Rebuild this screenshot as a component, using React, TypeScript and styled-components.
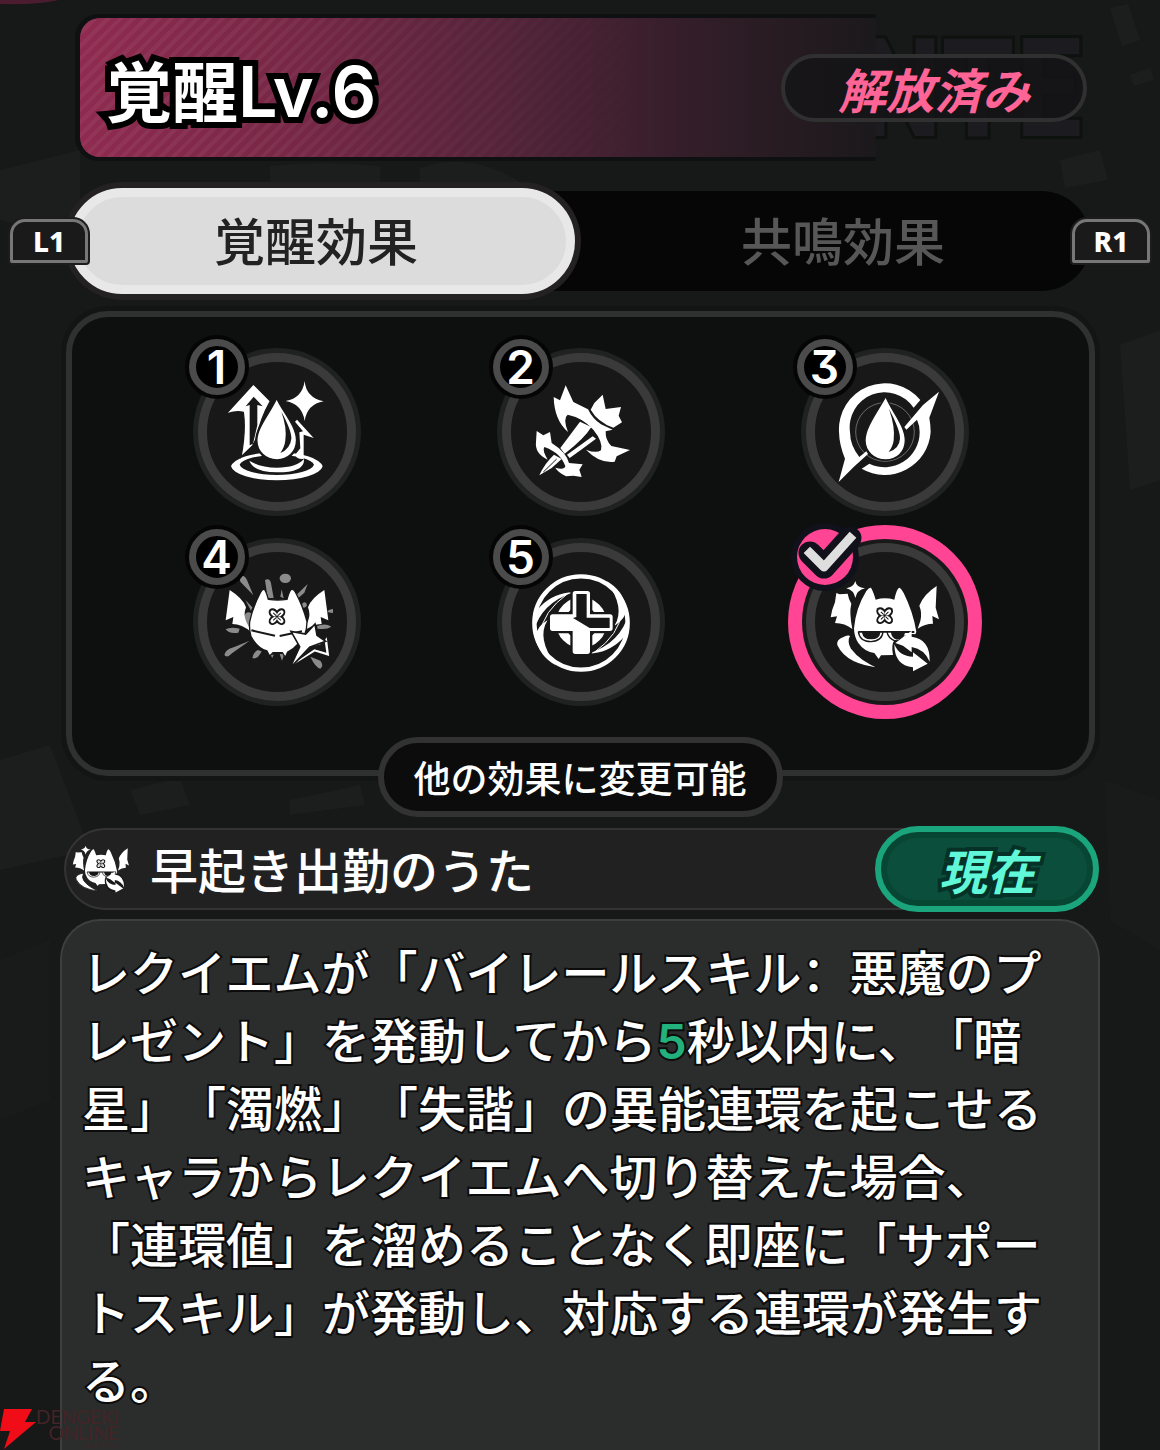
import React, { useState } from "react";
import styled, { createGlobalStyle, css } from "styled-components";

const ink = "#181818";

const GlobalStyle = createGlobalStyle`
  *, *::before, *::after { box-sizing: border-box; }
  body {
    margin: 0;
    background: #171818;
    color: #fff;
    font-family: "Noto Sans CJK JP", sans-serif;
    text-spacing-trim: space-all;
  }
  button { font: inherit; color: inherit; padding: 0; border: 0; background: none; cursor: pointer; }
  h1, h2, p { margin: 0; }
`;

const Page = styled.main`
  position: relative;
  display: flex;
  flex-direction: column;
  min-height: 100vh;
  padding-top: 18px;
  overflow: hidden;
  isolation: isolate;
`;

const Backdrop = styled.svg`
  position: absolute;
  inset: 0;
  z-index: -1;
  width: 100%;
  height: 100%;
`;

const Header = styled.header`
  position: relative;
  display: flex;
  align-items: center;
  justify-content: space-between;
  height: 139px;
  margin: 0 73px 0 80px;
  padding-left: 26px;
`;

const Banner = styled.span`
  position: absolute;
  inset: 0 21% 0 0;
  border-radius: 20px 0 0 20px;
  background: linear-gradient(90deg, #8f2b50 0%, #762745 28%, #55243a 53%, #341e29 76%, #1b191c 100%);
  box-shadow: -1px 0 0 4px #0f1011;
  clip-path: inset(-6px 0 -6px -8px);

  &::before {
    content: "";
    position: absolute;
    inset: 0;
    border-radius: inherit;
    background: repeating-linear-gradient(135deg, rgba(255, 255, 255, 0.05) 0 4px, transparent 4px 9px);
    mask-image: linear-gradient(90deg, #000 20%, transparent 75%);
  }
`;

const Ghost = styled.span`
  position: absolute;
  right: 4px;
  top: 0;
  font: 700 138px/143px "Liberation Sans Narrow", "Roboto Condensed", "Liberation Sans", sans-serif;
  color: #1b1b20;
  -webkit-text-stroke: 6px #0e120f;
  paint-order: stroke fill;
`;

const Title = styled.h1`
  position: relative;
  font-size: 66px;
  line-height: 96px;
  font-weight: 700;
  -webkit-text-stroke: 12px #000;
  paint-order: stroke fill;
`;

const Latin = styled.span`
  font-family: Inter, sans-serif;
  font-feature-settings: "cv09";
  font-size: 70px;
  line-height: 1;
  font-weight: 600;
`;

const Status = styled.span`
  position: relative;
  display: grid;
  place-items: center;
  width: 306px;
  height: 68px;
  border: 4px solid #303031;
  border-radius: 34px;
  background: rgba(20, 20, 22, 0.85);
  color: #ff6496;
  font-size: 48px;
  line-height: 60px;
  font-weight: 700;
  font-style: italic;
`;

const TabRow = styled.nav`
  display: flex;
  align-items: center;
  height: 106px;
  margin-top: 31px;
  padding: 0 10px;
`;

const KeyCap = styled.kbd`
  position: relative;
  z-index: 1;
  display: grid;
  place-items: center;
  flex: none;
  width: 78px;
  height: 44px;
  border: 3px solid #777;
  border-radius: 15px 15px 2px 2px;
  background: #1a1a1a;
  box-shadow: 0 0 0 2px #1c1c1c;
  font: 800 28px/36px "Noto Sans", sans-serif;
`;

const Track = styled.div`
  display: grid;
  grid-template-columns: 507fr 517fr;
  align-items: center;
  flex: 1;
  height: 100px;
  margin: 0 -19px;
  border-radius: 50px;
  background: #060606;
`;

const Tab = styled.button<{ $active: boolean }>`
  height: 106px;
  margin: -3px 0;
  padding: 0 0 4px 20px;
  border-radius: 53px;
  font-size: 51px;
  line-height: 74px;
  font-weight: 500;
  color: #575757;
  ${(p) =>
    p.$active &&
    css`
      padding: 0 12px 4px 0;
      border: 9px solid #e8e8e8;
      background: #dcdcdc;
      box-shadow: 0 0 0 6px #232121;
      color: #222;
    `}
`;

const EffectPanel = styled.section`
  display: grid;
  grid-template-columns: repeat(3, minmax(0, 304px));
  grid-auto-rows: 190px;
  justify-content: center;
  margin: 17px 65px 0 66px;
  padding: 20px 0 53px;
  border: 6px solid #2f3030;
  border-radius: 42px;
  background: #0d100e;
  box-shadow: 0 0 0 5px #131414;
`;

const Node = styled.button<{ $selected: boolean }>`
  position: relative;
  place-self: center;
  display: grid;
  place-items: center;
  width: 158px;
  height: 158px;
  border: 9px solid #3a3a3a;
  border-radius: 50%;
  background: ${ink};
  box-shadow: ${(p) =>
    p.$selected ? "0 0 0 4px #19191a, 0 0 0 18px #ff4593" : "0 0 0 5px #202121"};
`;

const Badge = styled.span<{ $selected: boolean }>`
  position: absolute;
  top: -23px;
  left: -18px;
  display: grid;
  place-items: center;
  width: 56px;
  height: 56px;
  border: 7px solid #4b4b4b;
  border-radius: 50%;
  background: #000;
  box-shadow: 0 0 0 4px #050505;
  font: 600 46px/42px Inter, sans-serif;
  font-feature-settings: "cv09";
  ${(p) =>
    p.$selected &&
    css`
      border: 0;
      background: #ff4593;
      box-shadow: 0 0 0 6px #10111b;
    `}
`;

const NodeArt = styled.svg`
  width: 112px;
  height: 112px;
  flex: none;
  margin: -10px;
`;

const CheckArt = styled.svg`
  width: 76px;
  height: 68px;
  margin: -10px;
`;

const Notice = styled.button`
  position: relative;
  align-self: center;
  height: 80px;
  margin-top: -39px;
  padding: 0 30px;
  border: 6px solid #323232;
  border-radius: 40px;
  background: #0c0c0c;
  font-size: 37px;
  line-height: 60px;
  font-weight: 500;
`;

const EffectBar = styled.div`
  display: flex;
  align-items: center;
  height: 82px;
  margin: 11px 61px 0 64px;
  padding-left: 6px;
  border: 2px solid #343434;
  border-radius: 41px;
  background: #212121;
`;

const BarArt = styled.svg`
  width: 58px;
  height: 58px;
  flex: none;
`;

const EffectName = styled.h2`
  flex: 1;
  margin-left: 20px;
  padding-bottom: 2px;
  font-size: 48px;
  line-height: 70px;
  font-weight: 500;
`;

const Current = styled.strong`
  display: grid;
  place-items: center;
  width: 224px;
  height: 86px;
  margin: -4px -2px -4px 0;
  border: 6px solid #1ba57d;
  border-radius: 43px;
  background: #0c4e3c;
  box-shadow: inset 0 0 0 6px #084634;
  color: #60f8d8;
  font-size: 48px;
  line-height: 70px;
  font-weight: 700;
  font-style: italic;
  -webkit-text-stroke: 8px #063126;
  paint-order: stroke fill;
`;

const Description = styled.p`
  flex: 1;
  margin: 9px 60px 0;
  padding: 15px 34px 32px 20px;
  border: 2px solid #3e3e3e;
  border-bottom: 0;
  border-radius: 40px 40px 0 0;
  background: rgba(46, 47, 47, 0.9);
  font-size: 48px;
  line-height: 68px;
  font-weight: 500;
  -webkit-text-stroke: 4px #0c0c0c;
  paint-order: stroke fill;
`;

const Colon = styled.span`
  font-family: "Noto Sans CJK SC", sans-serif;
`;

const Amount = styled.span`
  color: #22b07c;
  font-family: Inter, sans-serif;
  font-weight: 600;
  line-height: 1;
`;

const Watermark = styled.div`
  position: absolute;
  left: 0;
  bottom: 0;
  display: flex;
  align-items: flex-start;
  height: 41px;
  color: #432427;
  font: 400 19px/16px Lato, sans-serif;
  text-align: right;
`;

const Bolt = styled.svg`
  width: 36px;
  height: 40px;
`;

const Kana = styled.small`
  display: block;
  font: 400 7px/8px "Noto Sans CJK JP", sans-serif;
`;

const petals = [45, 135, 225, 315];

const Flower = ({ x, y }: { x: number; y: number }) => (
  <g>
    {petals.map((a) => (
      <ellipse key={a} cx={x} cy={y - 14} rx="13" ry="17" fill={ink} transform={`rotate(${a} ${x} ${y})`} />
    ))}
    {petals.map((a) => (
      <ellipse key={a} cx={x} cy={y - 14} rx="7" ry="11" fill="#fff" transform={`rotate(${a} ${x} ${y})`} />
    ))}
    {petals.map((a) => (
      <path
        key={a}
        d={`M${x} ${y - 4}V${y - 16}`}
        stroke={ink}
        strokeWidth="3"
        transform={`rotate(${a} ${x} ${y})`}
      />
    ))}
  </g>
);

const Surge = () => (
  <g fill="#fff">
    <path fillRule="evenodd" d="M152 408A138 46 0 0 0 427 408A138 46 0 0 0 152 408ZM178 403A112 32 0 0 1 401 403A112 34 0 0 1 178 403Z" />
    <path d="M207 391Q240 412 290 412Q348 412 371 386Q374 426 290 426Q220 426 207 391Z" />
    <path stroke={ink} strokeWidth="4" d="M219 161L270 212Q240 265 228 325L217 346L182 380Q197 300 189 246Q165 240 134 254Z" />
    <path fill={ink} d="M220 199L247 228L231 224V285L218 340L208 345V224L196 228Z" />
    <path d="M350 268L400 323L370 313V386Q350 388 344 374L360 354L357 306L368 303L344 274Z" />
    <path stroke={ink} strokeWidth="7" d="M289 200C305 240 350 285 350 330C350 367 322 390 290 390C255 390 228 365 228 330C228 290 270 245 289 200Z" />
    <path fill={ink} d="M303 244Q320 290 315 330Q313 350 300 368Q330 355 333 325Q334 300 303 244Z" />
    <path d="M373 152Q377 202 430 213Q380 222 373 272Q366 222 316 212Q366 203 373 152Z" />
  </g>
);

const Blade = () => (
  <g fill="#fff">
    <path d="M282 274L316 290Q295 325 236 370L223 353Z" />
    <path d="M320 318L330 325Q290 355 251 383L243 373Z" />
    <path d="M239 165L262 215L306 237Q320 266 345 282L380 298L359 303Q358 330 376 347L432 359L392 378L386 394Q340 400 300 358Q330 370 345 360Q352 335 322 298Q290 262 245 253Q230 264 246 305Q205 270 203 200L222 210Z" />
    <path d="M350 193L359 236L405 230L398 256L408 276L382 292Q335 275 314 238L325 218Z" />
    <path d="M152 302L172 315L192 305L197 338Q240 365 249 398L290 402L280 418L287 440L262 436L240 438Q215 425 208 412Q235 420 238 408Q225 368 175 350Q168 360 185 388Q146 370 150 335Z" />
    <path d="M204 373L227 386L197 413L160 435Q175 400 204 373Z" />
    <path d="M212 386L172 425" stroke={ink} strokeWidth="3" />
  </g>
);

const Balance = () => (
  <g fill="#fff">
    <circle cx="282" cy="305" r="88" fill="none" stroke="#bbb" strokeWidth="1.5" />
    <path d="M388 209A138 138 0 0 0 144 305Q145 345 162 385L143 455L188 410L231 371L226 363L205 380Q177 345 177 305A105 105 0 0 1 368 232Z" />
    <path d="M444 184L396 224L340 290L346 298L378 268Q386 285 386 305A105 105 0 0 1 235 400L212 415A138 138 0 0 0 419 305Q419 285 415 262Z" />
    <path stroke={ink} strokeWidth="4" d="M284 198C299 238 343 285 343 330C343 367 316 389 284 389C250 389 222 364 222 330C222 290 262 240 284 198Z" />
    <path fill={ink} d="M294 236Q313 290 308 330Q306 348 293 365Q325 355 327 325Q328 300 294 236Z" />
  </g>
);

const wing = "M148 210L136 301L159 291L156 312Q185 312 212 336Q208 322 198 306Q188 285 197 262Q188 235 148 210Z";

const Burst = () => (
  <g fill="#fff">
    <g fill="#8b8b8b">
      <ellipse cx="315" cy="175" rx="17" ry="14" />
      <path d="M178 170Q190 162 200 180L219 226L180 185ZM254 180Q268 172 272 190L280 234L262 234ZM382 192L372 218L350 238L345 228ZM300 230L304 208L310 235ZM195 240L216 262L212 272ZM366 250Q378 242 380 256Q376 266 366 262ZM442 272Q460 262 472 272Q465 284 442 276ZM136 328Q150 320 178 326L174 338Q145 342 136 328ZM410 318Q435 308 453 320Q440 330 412 326ZM132 405Q135 388 160 382L208 362L155 400Q140 416 132 405ZM216 414Q220 396 232 390L244 394Q232 420 216 414ZM390 410L420 422Q432 438 420 446Q405 442 390 410ZM298 402L312 402L305 422ZM270 404L280 404L276 414Z" />
      <path d="M190 290Q200 270 212 280V318L200 320Z" />
    </g>
    <path d={wing} />
    <path d={wing} transform="translate(580) scale(-1 1)" />
    <path stroke={ink} strokeWidth="4" d="M250 208Q256 208 264 238Q292 242 320 238Q328 208 335 208Q342 208 348 222Q368 260 380 305Q380 350 350 375Q340 388 322 396L315 412L306 398H278L268 408L260 393Q232 385 212 350Q206 330 208 305Q218 260 240 218Q245 208 250 208Z" />
    <path d="M213 331L284 347M298 348L365 334" stroke={ink} strokeWidth="6" />
    <Flower x={290} y={290} />
    <path stroke={ink} strokeWidth="6" d="M441 342L450 412L404 398L326 446L345 400L400 360L424 372Z" />
    <path fill={ink} d="M433 362L438 398L402 388L352 422L390 380L425 372Z" />
    <path stroke={ink} strokeWidth="5" d="M404 312L410 346L436 364L388 382L328 446L358 380L332 334L376 342Z" />
  </g>
);

const Aid = () => (
  <g fill="#fff">
    <circle cx="285" cy="309" r="140" fill="none" stroke="#fff" strokeWidth="13" />
    {[0, 180].map((a) => (
      <g key={a} transform={`rotate(${a} 285 309)`}>
        <path d="M262 217Q205 218 162 260Q140 285 143 335Q165 250 262 217Z" />
        <path d="M185 300Q150 355 210 436Q158 408 148 350Q152 320 185 300Z" />
        <path d="M245 221Q170 275 164 340" fill="none" stroke="#fff" strokeWidth="3" />
      </g>
    ))}
    <circle cx="286" cy="308" r="63" fill="none" stroke="#fff" strokeWidth="26" />
    <path
      stroke={ink}
      strokeWidth="14"
      paintOrder="stroke"
      d="M268 213H304Q312 213 312 221V283H372Q380 283 380 291V325Q380 333 372 333H312V394Q312 402 304 402H268Q260 402 260 394V333H200Q192 333 192 325V291Q192 283 200 283H260V221Q260 213 268 213Z"
    />
    <path fill={ink} d="M271 222H302V293H371V324H311L261 294L271 291Z" />
  </g>
);

const Swap = () => (
  <g fill="#fff">
    <path d="M223 198Q226 218 252 220Q228 225 223 249Q218 225 196 220Q218 216 223 198Z" />
    <path d="M166 234L176 238L200 236Q202 250 211 266Q204 292 214 342Q192 324 162 324L168 304L149 307Q152 285 162 262Z" />
    <path d="M467 213L464 278L474 313L454 303L456 326Q432 326 410 341L418 318Q424 295 415 272Q428 238 467 213Z" />
    <path d="M270 218Q277 230 284 254Q312 246 340 254Q347 220 355 218Q360 219 368 234Q396 290 406 350L398 372L340 376Q330 390 336 420L300 421L293 432L280 414Q250 410 232 384Q219 365 219 340Q224 280 256 228Q264 217 270 218Z" />
    <g fill="none" stroke={ink} strokeWidth="4">
      <path d="M232 350Q236 380 270 380Q304 378 306 350M318 350Q320 370 346 380" />
    </g>
    <path fill={ink} d="M232 348H400V354H372Q368 372 348 374Q332 370 330 353H298Q296 372 270 373Q246 372 243 353H232Z" />
    <Flower x={311} y={302} />
    <path stroke={ink} strokeWidth="5" d="M203 358Q160 368 167 392Q195 452 300 461Q240 438 212 400Q200 380 210 362Z" />
    <circle cx="393" cy="412" r="55" fill={ink} />
    <path d="M343 384L392 347V365Q448 372 446 440Q430 402 392 396V412L366 392Z" />
    <path d="M340 388Q355 425 396 425V412L440 446L396 469V457Q340 452 340 388Z" />
  </g>
);

const effects = [
  { name: "覚醒 1", art: Surge, box: "122 137 336 336" },
  { name: "覚醒 2", art: Blade, box: "117 137 336 336" },
  { name: "覚醒 3", art: Balance, box: "114 137 336 336" },
  { name: "覚醒 4", art: Burst, box: "122 138 336 336" },
  { name: "覚醒 5", art: Aid, box: "117 138 336 336" },
  { name: "覚醒 6", art: Swap, box: "144 153 336 336" },
];

export default function App() {
  const [tab, setTab] = useState(0);
  const [selected, setSelected] = useState(5);

  return (
    <>
      <GlobalStyle />
      <Page>
        <Backdrop viewBox="0 0 1160 1450" preserveAspectRatio="xMidYMid slice" aria-hidden="true">
          <path d="M0 0H58Q40 5 0 4Z" fill="#4a1c2e" />
          <g fill="#1b1e1d">
            <path d="M0 170L80 150V240L0 220ZM270 166Q320 160 380 166V182H270ZM420 168Q470 150 520 182H420Z" />
            <path d="M1110 8L1128 4L1140 40L1122 46ZM1130 75L1150 68L1154 80L1134 86ZM1060 160L1100 150L1108 180L1065 188ZM1120 345L1160 330V480L1130 490Z" />
            <path d="M0 760L50 745L90 850L0 870ZM130 790L180 778L190 805L140 815ZM290 800L360 785L365 805L290 815Z" />
            <path d="M1105 780L1160 800V950L1110 920ZM0 960L50 940V1100L0 1120Z" opacity=".5" />
            <path d="M70 1060L250 1010L290 1160L110 1220ZM700 1180L980 1100L1040 1290L780 1340Z" opacity=".7" />
          </g>
        </Backdrop>

        <Header>
          <Ghost aria-hidden="true">NTE</Ghost>
          <Banner />
          <Title>
            覚醒<Latin>Lv.6</Latin>
          </Title>
          <Status>解放済み</Status>
        </Header>

        <TabRow>
          <KeyCap>L1</KeyCap>
          <Track>
            {["覚醒効果", "共鳴効果"].map((label, i) => (
              <Tab key={label} type="button" $active={tab === i} onClick={() => setTab(i)}>
                {label}
              </Tab>
            ))}
          </Track>
          <KeyCap>R1</KeyCap>
        </TabRow>

        <EffectPanel>
          {effects.map(({ name, art: Art, box }, i) => (
            <Node
              key={name}
              type="button"
              aria-label={name}
              aria-pressed={selected === i}
              $selected={selected === i}
              onClick={() => setSelected(i)}
            >
              <NodeArt viewBox={box}>
                <Art />
              </NodeArt>
              <Badge $selected={selected === i}>
                {selected === i ? (
                  <CheckArt viewBox="0 0 76 68" fill="none" strokeLinejoin="round">
                    <path d="M23 30L37 44L63 15" stroke="#10111b" strokeWidth="23" strokeLinecap="round" />
                    <path d="M23 30L37 44L63 15" stroke="#dededf" strokeWidth="9" strokeLinecap="square" />
                  </CheckArt>
                ) : (
                  i + 1
                )}
              </Badge>
            </Node>
          ))}
        </EffectPanel>
        <Notice type="button">他の効果に変更可能</Notice>

        <EffectBar>
          <BarArt viewBox="144 165 336 336">
            <Swap />
          </BarArt>
          <EffectName>早起き出勤のうた</EffectName>
          <Current>現在</Current>
        </EffectBar>

        <Description>
          レクイエムが「バイレールスキル<Colon>：</Colon>悪魔のプレゼント」を発動してから<Amount>5</Amount>
          秒以内に、「暗星」「濁燃」「失諧」の異能連環を起こせるキャラからレクイエムへ切り替えた場合、「連環値」を溜めることなく即座に「サポートスキル」が発動し、対応する連環が発生する。
        </Description>

        <Watermark>
          <Bolt viewBox="0 0 36 40" aria-hidden="true">
            <path d="M4 0H32L25 13H36L4 40L10 22H0Z" fill="#f00d18" />
          </Bolt>
          <div>
            DENGEKI
            <br />
            ONLINE
            <Kana>オンライン</Kana>
          </div>
        </Watermark>
      </Page>
    </>
  );
}
